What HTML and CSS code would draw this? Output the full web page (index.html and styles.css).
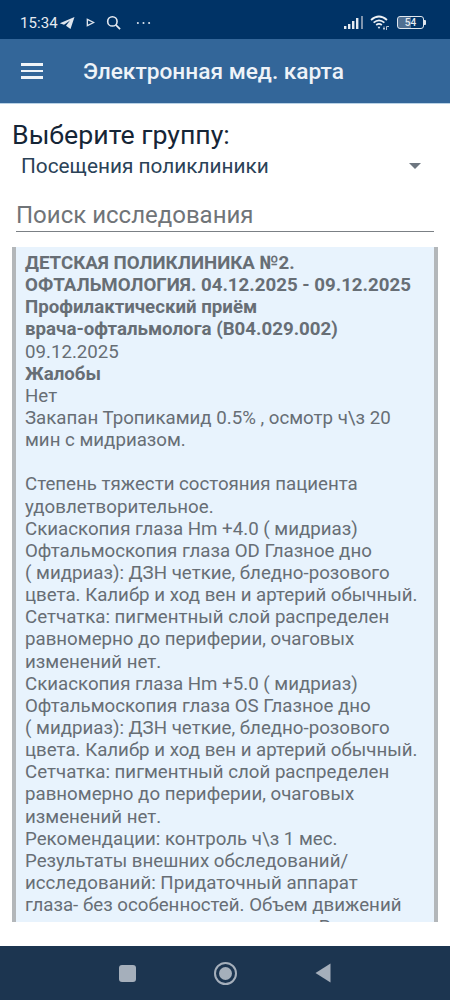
FILE: index.html
```html
<!DOCTYPE html>
<html lang="ru">
<head>
<meta charset="utf-8">
<title>Электронная мед. карта</title>
<link rel="stylesheet" href="styles.css">
</head>
<body>
<div class="status">
  <div class="status-left">
    <span class="time">15:34</span>
    <svg class="ic-tg" viewBox="0 0 16 14"><path d="M15.5 1 L0.8 7.3 L5 8.8 L11 4.5 L7 9.8 L11.5 13 Z" fill="#dfe6ee"/></svg>
    <svg class="ic-play" viewBox="0 0 10 10"><path d="M1.5 1.5 L8.5 5 L1.5 8.5 Z" fill="none" stroke="#dfe6ee" stroke-width="1.5"/></svg>
    <svg class="ic-search" viewBox="0 0 16 16"><circle cx="6.8" cy="6.8" r="5" fill="none" stroke="#e6ebf1" stroke-width="1.7"/><path d="M10.5 10.5 L15 15" stroke="#e6ebf1" stroke-width="1.9"/></svg>
    <svg class="ic-dots" viewBox="0 0 16 4"><circle cx="2" cy="2" r="1.1" fill="#dfe6ee"/><circle cx="8" cy="2" r="1.1" fill="#dfe6ee"/><circle cx="14" cy="2" r="1.1" fill="#dfe6ee"/></svg>
  </div>
  <div class="status-right">
    <svg class="ic-signal" viewBox="0 0 20 13"><rect x="0" y="10" width="2.4" height="3" fill="#e6ebf1"/><rect x="4" y="8" width="2.4" height="5" fill="#e6ebf1"/><rect x="8" y="5" width="2.4" height="8" fill="#e6ebf1"/><rect x="12" y="2" width="2.4" height="11" fill="#e6ebf1"/><rect x="17" y="0" width="2" height="13" fill="#7f94ad"/></svg>
    <svg class="ic-wifi" viewBox="0 0 20 15"><path d="M1 5 Q9 -2 17 5 M3.6 7.6 Q9 3 14.4 7.6 M6.2 10 Q9 7.6 11.8 10" fill="none" stroke="#eef2f6" stroke-width="1.7"/><path d="M7.6 11.8 L10.4 11.8 L9 14 Z" fill="#eef2f6"/><path d="M13 13.5 H15 M14 11.5 V15 M16.5 11.5 V15 M16.5 11.5 H19" stroke="#c9d3df" stroke-width="0.9" fill="none"/></svg>
    <div class="battery"><span class="battery-num">54</span></div><span class="battery-tip"></span>
  </div>
</div>
<header class="appbar">
  <div class="burger"><span></span><span></span><span></span></div>
  <h1 class="title">Электронная мед. карта</h1>
</header>
<main class="content">
  <div class="group-label">Выберите группу:</div>
  <div class="select">
    <span>Посещения поликлиники</span>
    <span class="caret"></span>
  </div>
  <div class="search">Поиск исследования</div>
  <div class="card">
    <div class="card-text"><b>ДЕТСКАЯ ПОЛИКЛИНИКА №2.<br>ОФТАЛЬМОЛОГИЯ. 04.12.2025 - 09.12.2025<br>Профилактический приём<br>врача-офтальмолога (В04.029.002)</b><br>09.12.2025<br><b>Жалобы</b><br>Нет<br>Закапан Тропикамид 0.5% , осмотр ч\з 20<br>мин с мидриазом.<br><br>Степень тяжести состояния пациента<br>удовлетворительное.<br>Скиаскопия глаза Hm +4.0 ( мидриаз)<br>Офтальмоскопия глаза OD Глазное дно<br>( мидриаз): ДЗН четкие, бледно-розового<br>цвета. Калибр и ход вен и артерий обычный.<br>Сетчатка: пигментный слой распределен<br>равномерно до периферии, очаговых<br>изменений нет.<br>Скиаскопия глаза Hm +5.0 ( мидриаз)<br>Офтальмоскопия глаза OS Глазное дно<br>( мидриаз): ДЗН четкие, бледно-розового<br>цвета. Калибр и ход вен и артерий обычный.<br>Сетчатка: пигментный слой распределен<br>равномерно до периферии, очаговых<br>изменений нет.<br>Рекомендации: контроль ч\з 1 мес.<br>Результаты внешних обследований/<br>исследований: Придаточный аппарат<br>глаза- без особенностей. Объем движений<br>глаз не ограничен, нистагма нет. Роговица</div>
  </div>
</main>
<nav class="navbar">
  <span class="nav-square"></span>
  <span class="nav-circle"><span class="nav-dot"></span></span>
  <svg class="nav-back" viewBox="0 0 16 20"><path d="M15.5 0.5 V19.5 L0.5 10 Z" fill="#a5afbb"/></svg>
</nav>
</body>
</html>
```
FILE: styles.css
```css
* { box-sizing: border-box; }
html, body { margin: 0; padding: 0; }
body {
  width: 450px;
  height: 1000px;
  overflow: hidden;
  display: flex;
  flex-direction: column;
  background: #fff;
  font-family: Roboto, "Liberation Sans", sans-serif;
}
.status {
  height: 39px;
  flex: none;
  background: #003366;
  display: flex;
  justify-content: space-between;
  align-items: center;
  padding: 6px 0 0 20px;
  color: #e6ebf1;
}
.status-left, .status-right { display: flex; align-items: center; }
.time { font-size: 15px; letter-spacing: 0.1px; }
.ic-tg { width: 16px; height: 14px; margin-left: 1px; }
.ic-play { width: 9px; height: 9px; margin-left: 11px; }
.ic-search { width: 15px; height: 15px; margin-left: 11px; }
.ic-dots { width: 15px; height: 4px; margin-left: 15px; }
.status-right { padding-right: 24px; }
.ic-signal { width: 20px; height: 13px; }
.ic-wifi { width: 20px; height: 15px; margin-left: 6px; }
.battery {
  width: 27px;
  height: 13px;
  margin-left: 7px;
  border: 1px solid #dfe6ee;
  border-radius: 3px;
  background: linear-gradient(to right, #4f6f92 54%, transparent 54%);
  display: flex;
  align-items: center;
  justify-content: center;
}
.battery-num { font-size: 10px; font-weight: 500; color: #e6ebf1; line-height: 1; }
.battery-tip { width: 2px; height: 5px; background: #dfe6ee; border-radius: 0 1px 1px 0; }
.appbar {
  height: 65px;
  flex: none;
  background: #336699;
  border-bottom: 1px solid #b9d2e6;
  display: flex;
  align-items: center;
  padding-left: 21px;
}
.burger { width: 22px; display: flex; flex-direction: column; gap: 4px; }
.burger span { display: block; height: 2.5px; background: #f0f4f8; }
.title {
  margin: 0 0 0 40px;
  font-size: 22.7px;
  font-weight: 500;
  color: #eef3f8;
}
.content {
  flex: 1;
  min-height: 0;
  padding: 16px 12px 24px;
  display: flex;
  flex-direction: column;
}
.group-label { font-size: 26.7px; line-height: 30px; color: #152536; }
.select {
  height: 30px;
  margin-top: 1px;
  padding: 0 17px 0 9px;
  display: flex;
  justify-content: space-between;
  align-items: center;
  font-size: 20.8px;
  color: #2a4257;
}
.caret {
  width: 0;
  height: 0;
  border-left: 6px solid transparent;
  border-right: 6px solid transparent;
  border-top: 6px solid #6d7680;
}
.search {
  margin: 12px 4px 0;
  height: 39px;
  padding-top: 6px;
  border-bottom: 1px solid #7b8085;
  font-size: 24px;
  line-height: 32px;
  color: #707478;
}
.card {
  margin-top: 15px;
  flex: 1;
  min-height: 0;
  overflow: hidden;
  background: #e8f3fd;
  border-left: 4px solid #b3b7ba;
  border-right: 4px solid #b3b7ba;
  padding: 5px 0 0 9px;
}
.card-text {
  font-size: 18.7px;
  line-height: 22.14px;
  color: #676e75;
  white-space: nowrap;
}
.card-text b { font-weight: 700; }
.navbar {
  height: 54px;
  flex: none;
  background: #1c3550;
  display: flex;
  align-items: center;
  justify-content: center;
}
.nav-square { width: 17px; height: 17px; border-radius: 3px; background: #a5afbb; margin-right: 78px; }
.nav-circle {
  width: 23px;
  height: 23px;
  border: 2.5px solid #a5afbb;
  border-radius: 50%;
  display: flex;
  align-items: center;
  justify-content: center;
}
.nav-dot { width: 13px; height: 13px; border-radius: 50%; background: #a5afbb; }
.nav-back { width: 16px; height: 20px; margin-left: 78px; }
```
